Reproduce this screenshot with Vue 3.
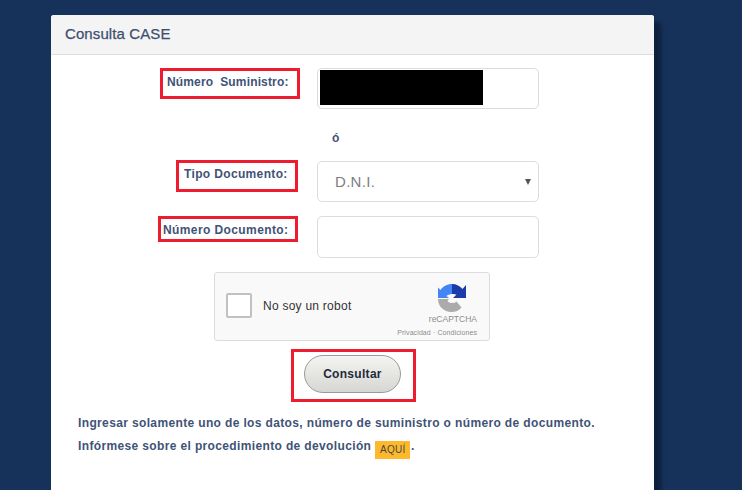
<template>
  <main class="page">
    <section class="case-card" aria-label="Consulta CASE">
      <header class="case-card__head">Consulta CASE</header>

      <form class="case-form" @submit.prevent>
        <div class="case-row case-row--first">
          <div class="case-row__label">
            <label class="mark mark--first">Número&nbsp; Suministro:</label>
          </div>
          <div class="fake-input">
            <span class="redacted"></span>
          </div>
        </div>

        <p class="case-or">ó</p>

        <div class="case-row case-row--tipo">
          <div class="case-row__label">
            <label class="mark mark--tipo">Tipo Documento:</label>
          </div>
          <div class="fake-input fake-input--select">
            <span>D.N.I.</span>
            <i class="caret"></i>
          </div>
        </div>

        <div class="case-row case-row--numero">
          <div class="case-row__label">
            <label class="mark mark--numero">Número Documento:</label>
          </div>
          <div class="fake-input fake-input--doc"></div>
        </div>

        <div class="captcha">
          <span class="captcha__check"></span>
          <span class="captcha__text">No soy un robot</span>
          <div class="captcha__brand">
            <svg width="30" height="30" viewBox="0 0 30 30" aria-hidden="true">
              <path fill="#4285f4" d="M15 1C10 1 6 3.500 3.500 7L1 4.500V15h11L9.500 13C10.500 12 12.500 11 15 11z" />
              <path fill="#1c3aa9" d="M15 1c4.500 0 8 2 10.500 5L29 2v13H16l3.500-3.500C18.500 11.500 17 11 15 11z" />
              <path fill="#ababab" d="M1 16h11l-1.500 2c1 1.500 2.500 2 4.500 2 2 0 3.500-.5 4.500-1.500l5 6c-2.500 3-6 4.500-10 4.500C7 29 1 23.500 1 16z" />
            </svg>
            <span class="captcha__name">reCAPTCHA</span>
            <span class="captcha__links">Privacidad · Condiciones</span>
          </div>
        </div>

        <div class="case-submit">
          <div class="mark mark--button">
            <button type="button" class="btn-consultar">Consultar</button>
          </div>
        </div>

        <div class="case-note">
          <p>Ingresar solamente uno de los datos, número de suministro o número de documento.</p>
          <p>Infórmese sobre el procedimiento de devolución <a class="aqui">AQUÍ</a>.</p>
        </div>
      </form>
    </section>
  </main>
</template>

<script setup>
</script>

<style>
html,
body {
  margin: 0;
  overflow: hidden;
  background: #17325a;
}
</style>

<style scoped>
.page {
  width: 742px;
  height: 490px;
  overflow: hidden;
  box-sizing: border-box;
  padding: 15px 0 0 51px;
  background: #17325a;
  font-family: "Liberation Sans", Arial, sans-serif;
}

.case-card {
  width: 603px;
  height: 500px;
  background: #fff;
  border-radius: 3px 3px 0 0;
  box-shadow: 7px 7px 4px rgba(6, 18, 38, 0.55);
}

.case-card__head {
  box-sizing: border-box;
  height: 40px;
  padding: 0 14px;
  line-height: 38px;
  font-size: 15px;
  letter-spacing: 0.1px;
  -webkit-text-stroke: 0.25px #3d4f6e;
  color: #3d4f6e;
  background: #f4f4f4;
  border-bottom: 1px solid #dedede;
  border-radius: 3px 3px 0 0;
}

.case-form {
  display: flex;
  flex-direction: column;
}

.case-row {
  display: flex;
  align-items: flex-start;
}

.case-row--first {
  margin-top: 13px;
}

.case-row--tipo,
.case-row--numero {
  margin-top: 14px;
}

.case-row__label {
  width: 249px;
  flex: none;
  display: flex;
  justify-content: flex-end;
  margin-right: 17px;
}

.mark {
  box-sizing: border-box;
  border: 3px solid #ed1c2e;
  background: #fff;
}

label.mark {
  display: block;
  color: #3f5377;
  font-size: 12px;
  font-weight: 700;
  white-space: nowrap;
}

.mark--first {
  width: 140px;
  height: 31px;
  padding: 4px 0 0 4px;
  letter-spacing: 0.15px;
}

.mark--tipo {
  width: 122px;
  height: 32px;
  padding: 4px 0 0 5px;
  margin: -1px 2px 0 0;
  letter-spacing: 0.35px;
}

.mark--numero {
  width: 140px;
  height: 26px;
  padding: 4px 0 0 2px;
  margin-right: 2px;
  letter-spacing: 0.4px;
}

.fake-input {
  box-sizing: border-box;
  width: 222px;
  height: 41px;
  border: 1px solid #dcdcdc;
  border-radius: 5px;
  background: #fff;
}

.fake-input--doc {
  height: 42px;
}

.fake-input--select {
  display: flex;
  align-items: center;
  justify-content: space-between;
  padding: 0 7px 0 17px;
  color: #7e7e7e;
  font-size: 15px;
  letter-spacing: 0.3px;
}

.redacted {
  display: block;
  width: 163px;
  height: 35px;
  margin: 1px 0 0 2px;
  background: #000;
}

.caret {
  width: 0;
  height: 0;
  border-left: 3px solid transparent;
  border-right: 3px solid transparent;
  border-top: 6px solid #555;
}

.case-or {
  margin: 20px 0 0 281px;
  height: 18px;
  line-height: 18px;
  color: #3f5377;
  font-size: 12px;
  font-weight: 700;
}

.captcha {
  box-sizing: border-box;
  display: flex;
  align-items: flex-start;
  width: 276px;
  height: 69px;
  margin: 14px 0 0 163px;
  padding: 20px 12px 0 11px;
  border: 1px solid #dcdcdc;
  border-radius: 3px;
  background: #f9f9f9;
}

.captcha__check {
  box-sizing: border-box;
  flex: none;
  width: 26px;
  height: 25px;
  border: 2px solid #c1c1c1;
  border-radius: 2px;
  background: #fff;
}

.captcha__text {
  margin: 6px 0 0 11px;
  color: #333;
  font-size: 12px;
  letter-spacing: 0.25px;
}

.captcha__brand {
  display: flex;
  flex-direction: column;
  align-items: flex-end;
  margin: -10px 0 0 auto;
}

.captcha__brand svg {
  margin-right: 10px;
}

.captcha__name {
  margin-top: 1px;
  color: #8d8d8d;
  font-size: 8.500px;
  line-height: 11px;
}

.captcha__links {
  margin-top: 3px;
  color: #8d8d8d;
  font-size: 7px;
  line-height: 10px;
  letter-spacing: 0.1px;
  white-space: nowrap;
}

.case-submit {
  display: flex;
  margin: 8px 0 0 240px;
}

.mark--button {
  width: 125px;
  height: 53px;
  padding: 3px 0 0 10px;
}

.btn-consultar {
  display: block;
  width: 97px;
  height: 38px;
  padding: 0;
  border: 1px solid #9a9a9a;
  border-radius: 19px;
  background: linear-gradient(#f4f4f2, #d6d6d2);
  color: #1f2a3c;
  font-family: inherit;
  font-size: 12px;
  font-weight: 700;
  letter-spacing: 0.3px;
}

.case-note {
  margin: 10px 0 0 27px;
  color: #3f5377;
  font-size: 12px;
  font-weight: 700;
  letter-spacing: 0.36px;
}

.case-note p {
  margin: 0;
  line-height: 23px;
}

.aqui {
  display: inline-block;
  margin-right: 1px;
  padding: 0 5px;
  width: 25px;
  height: 18px;
  line-height: 18px;
  background: #fdb92e;
  color: #4a4a3a;
  font-size: 10px;
  font-weight: 400;
  letter-spacing: 0.3px;
  vertical-align: -3px;
}
</style>
